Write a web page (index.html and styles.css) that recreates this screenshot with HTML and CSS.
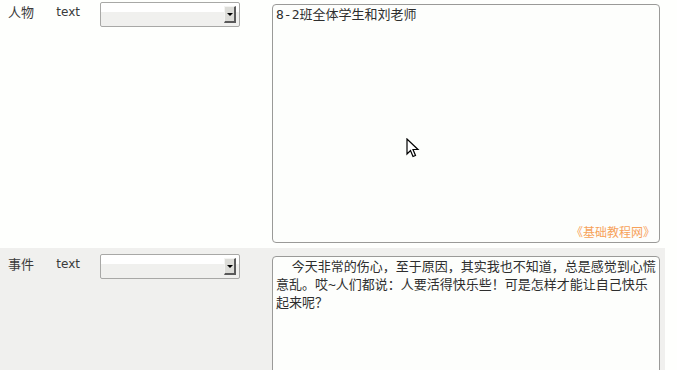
FILE: index.html
```html
<!DOCTYPE html>
<html lang="zh-CN">

<head>
    <meta charset="UTF-8">
    <title>表单</title>
    <link rel="stylesheet" href="styles.css">
</head>

<body>
    <div class="form">
        <div class="row">
            <div class="label">人物</div>
            <div class="type">text</div>
            <div class="select"><span class="arrow"></span></div>
            <div class="field">
                <textarea class="box">8-2班全体学生和刘老师</textarea>
                <span class="mark">《基础教程网》</span>
                <svg class="cursor" width="14" height="22" viewBox="0 0 14 22">
                    <path d="M1 1 L1 16 L4.5 12.5 L7 18.5 L9.5 17.5 L7 11.5 L12 11.5 Z" fill="#fff" stroke="#000" stroke-width="1.2" stroke-linejoin="miter"/>
                </svg>
            </div>
        </div>
        <div class="row alt">
            <div class="label">事件</div>
            <div class="type">text</div>
            <div class="select"><span class="arrow"></span></div>
            <div class="field">
                <textarea class="box">  今天非常的伤心，至于原因，其实我也不知道，总是感觉到心慌意乱。哎~人们都说：人要活得快乐些！可是怎样才能让自己快乐起来呢？</textarea>
            </div>
        </div>
    </div>
</body>

</html>
```

FILE: styles.css
```css
body {
    margin: 0;
    background-color: #fefffd;
    font-family: "DejaVu Sans", "Noto Sans CJK SC", sans-serif;
    font-size: 12px;
    color: #333;
    overflow: hidden
}

.form {
    width: 665px
}

.row {
    display: flex;
    align-items: flex-start;
    padding: 8px 5px 5px 8px
}

.row:first-child {
    padding-top: 4px
}

.alt {
    background-color: #f0f0ee
}

.label {
    width: 49px;
    line-height: 16px;
    font-family: "Noto Sans CJK SC", sans-serif;
    font-size: 13px;
    color: #3a3a3a
}

.type {
    width: 44px;
    line-height: 16px;
    color: #3a3a3a
}

.select {
    width: 137px;
    height: 23px;
    margin-top: -2px;
    border: 1px solid #a8a8a6;
    border-radius: 2px;
    background: linear-gradient(#fff 0, #fff 9px, #f0f0ee 9px);
    display: flex;
    justify-content: flex-end;
    align-items: center;
    padding-right: 3px;
    box-sizing: content-box
}

.arrow {
    width: 9px;
    height: 14px;
    background-color: #dcdcd8;
    border-right: 2px solid #5a5a5a;
    border-bottom: 2px solid #5a5a5a;
    border-top: 1px solid #f4f4f2;
    border-left: 1px solid #f4f4f2;
    display: flex;
    justify-content: center;
    align-items: center
}

.arrow::after {
    content: "";
    border-left: 3px solid transparent;
    border-right: 3px solid transparent;
    border-top: 3px solid #000
}

.field {
    position: relative;
    margin-left: 32px
}

.box {
    display: block;
    width: 388px;
    height: 239px;
    box-sizing: border-box;
    margin: 0;
    padding: 1px 2px 2px 3px;
    border: 1px solid #9a9a98;
    border-radius: 4px;
    background-color: #fdfefc;
    font-family: "DejaVu Sans Mono", "Noto Sans CJK SC", monospace;
    font-size: 13px;
    line-height: 18px;
    color: #2e2e2e;
    resize: none;
    overflow: hidden
}

.mark {
    position: absolute;
    right: 5px;
    bottom: 3px;
    font-family: "Noto Sans CJK SC", sans-serif;
    font-size: 12px;
    color: #f7a25a
}

.cursor {
    position: absolute;
    left: 134px;
    top: 134px
}
```
